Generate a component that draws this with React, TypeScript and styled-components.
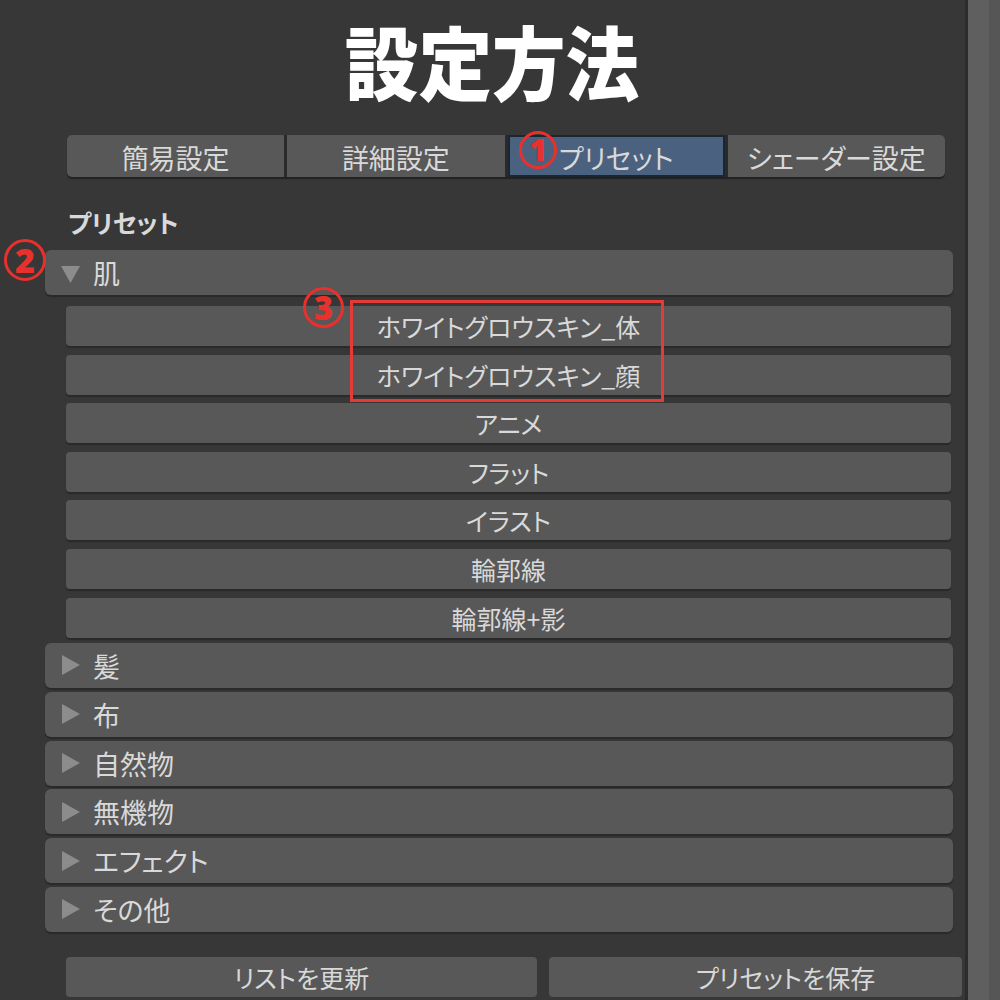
import React from 'react'
import styled, {createGlobalStyle} from 'styled-components'

const GlobalStyle = createGlobalStyle`
  html, body {
    margin:0;
    padding:0;
    background:#373737;
  }
  body {
    font-family:"Noto Sans CJK JP","Noto Sans",sans-serif;
    font-feature-settings:"palt";
  }
`

const color = {
  bg:'#373737',
  button:'#585858',
  shadow:'#2a2a2a',
  text:'#d9d9d9',
  blue:'#4b6180',
  red:'#e8302c',
  arrow:'#8c8c8c',
}

const Page = styled.div`
  width:1000px;
  height:1000px;
  overflow:hidden;
  display:flex;
`

const Main = styled.div`
  position:relative;
  width:965px;
  box-sizing:border-box;
  padding:25px 12px 0 45px;
  display:flex;
  flex-direction:column;
  background:${color.bg};
`

const Divider = styled.div`
  width:3px;
  background:#2c2c2c;
`
const Track = styled.div`
  width:21px;
  background:#5f5f5f;
`
const TrackEdge = styled.div`
  flex:1;
  background:#565656;
`

// title glyphs are a condensed heavy gothic in the shot
const Title = styled.h1`
  margin:-6px 0 6px -14px;
  height:80px;
  line-height:80px;
  text-align:center;
  font-size:80px;
  font-weight:900;
  color:#fff;
  transform:scaleX(0.92);
`

const Tabs = styled.div`
  margin:30px 8px 0 22px;
  height:42px;
  display:flex;
  gap:3px;
  background:${color.shadow};
  border-radius:5px;
  overflow:hidden;
  box-shadow:0 2px 1px #222;
`

const Tab = styled.div<{active?:boolean}>`
  flex:1;
  display:flex;
  align-items:center;
  justify-content:center;
  background:${p=>p.active?color.blue:color.button};
  ${p=>p.active?'box-shadow:inset 0 0 0 2px #1d2530;':''}
  color:${color.text};
  font-size:27px;
  padding-top:2px;
`

const SectionLabel = styled.div`
  margin:28px 0 0 23px;
  height:34px;
  line-height:34px;
  font-size:25px;
  font-weight:700;
  color:${color.text};
`

const Folder = styled.div<{open?:boolean}>`
  height:45px;
  box-sizing:border-box;
  display:flex;
  align-items:center;
  gap:12px;
  padding-left:16px;
  background:${color.button};
  border-radius:6px;
  box-shadow:0 2px 1px ${color.shadow};
  color:${color.text};
  font-size:27px;
  margin-top:${p=>p.open?'11px':'0'};
`

const FolderList = styled.div`
  margin-top:5.4px;
  display:flex;
  flex-direction:column;
  gap:3.8px;
`

const Items = styled.div`
  margin:11px 2px 0 21px;
  display:flex;
  flex-direction:column;
  gap:8.6px;
`

const Item = styled.div`
  height:40px;
  display:flex;
  align-items:center;
  justify-content:center;
  background:${color.button};
  border-radius:4px;
  box-shadow:0 2px 1px ${color.shadow};
  color:${color.text};
  font-size:25px;
`

const BottomRow = styled.div`
  margin:25px -9px 0 21px;
  display:flex;
  gap:12px;
`

const BottomButton = styled.div<{shift?:number}>`
  height:40px;
  flex:${p=>p.shift?'0 0 413px':'1'};
  display:flex;
  align-items:center;
  justify-content:center;
  box-sizing:border-box;
  padding-left:${p=>p.shift||0}px;
  background:${color.button};
  border-radius:4px;
  color:${color.text};
  font-size:25px;
`

const Badge = styled.div<{x:number;y:number;size:number}>`
  position:absolute;
  left:${p=>p.x}px;
  top:${p=>p.y}px;
  width:${p=>p.size}px;
  height:${p=>p.size}px;
  box-sizing:border-box;
  border:3px solid ${color.red};
  border-radius:50%;
  display:flex;
  align-items:center;
  justify-content:center;
  color:${color.red};
  font-family:"Noto Sans",sans-serif;
  font-size:${p=>Math.round(p.size*0.8)}px;
  font-weight:900;
  line-height:1;
`

const Highlight = styled.div`
  position:absolute;
  left:350px;
  top:300px;
  width:314px;
  height:102px;
  box-sizing:border-box;
  border:3px solid #e33b37;
`

const ArrowBox = styled.svg`
  flex:0 0 auto;
`

const Arrow = ({open}:{open?:boolean})=>(
  <ArrowBox width="20" height="20" viewBox="0 0 20 20">
    {open
      ? <polygon points="0,3 19,3 9.5,20" fill={color.arrow}/>
      : <polygon points="1,0 19,10 1,20" fill={color.arrow}/>}
  </ArrowBox>
)

const tabs = ['簡易設定','詳細設定','プリセット','シェーダー設定']
const skins = ['ホワイトグロウスキン_体','ホワイトグロウスキン_顔','アニメ','フラット','イラスト','輪郭線','輪郭線+影']
const folders = ['髪','布','自然物','無機物','エフェクト','その他']

export default function App(){
  return(
    <Page>
      <GlobalStyle/>
      <Main>
        <Title>設定方法</Title>
        <Tabs>
          {tabs.map((t,i)=>(
            <Tab key={t} active={i===2}>{t}</Tab>
          ))}
        </Tabs>
        <SectionLabel>プリセット</SectionLabel>
        <Folder open>
          <Arrow open/>
          肌
        </Folder>
        <Items>
          {skins.map(s=>(
            <Item key={s}>{s}</Item>
          ))}
        </Items>
        <FolderList>
          {folders.map(f=>(
            <Folder key={f}>
              <Arrow/>
              {f}
            </Folder>
          ))}
        </FolderList>
        <BottomRow>
          <BottomButton>リストを更新</BottomButton>
          <BottomButton shift={60}>プリセットを保存</BottomButton>
        </BottomRow>

        <Badge x={519} y={131} size={38}>1</Badge>
        <Badge x={4} y={239} size={42}>2</Badge>
        <Badge x={303} y={287} size={41}>3</Badge>
        <Highlight/>
      </Main>
      <Divider/>
      <Track/>
      <TrackEdge/>
    </Page>
  )
}
